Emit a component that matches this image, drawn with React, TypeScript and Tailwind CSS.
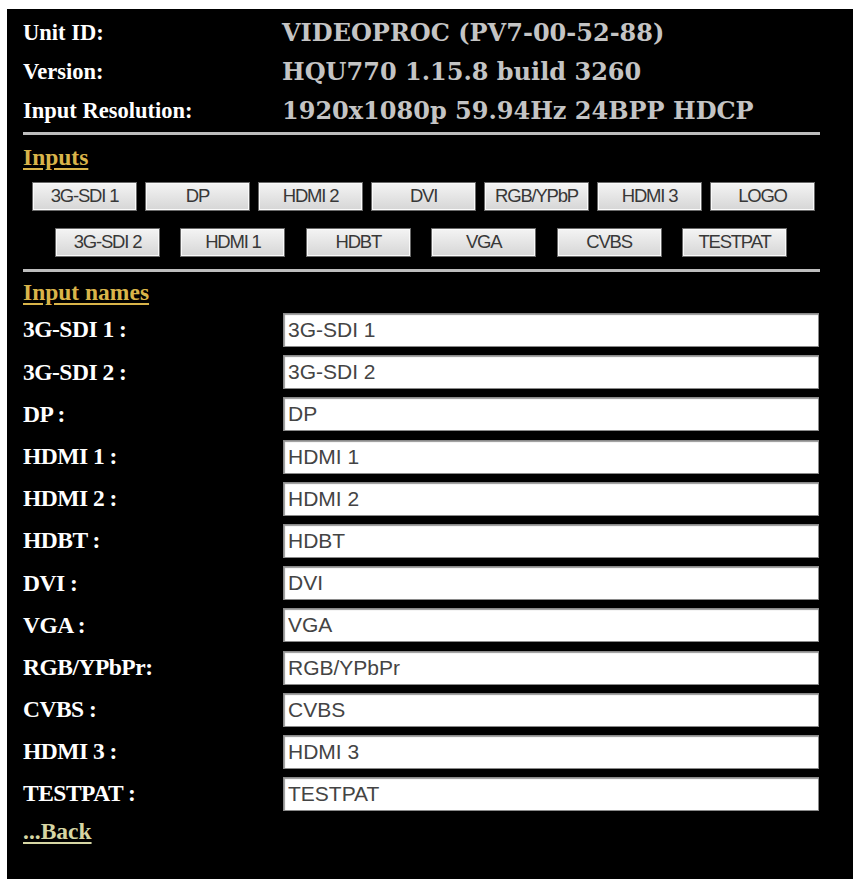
import React from 'react';

const info = [
  { label: 'Unit ID:', value: 'VIDEOPROC (PV7-00-52-88)' },
  { label: 'Version:', value: 'HQU770 1.15.8 build 3260' },
  { label: 'Input Resolution:', value: '1920x1080p 59.94Hz 24BPP HDCP' },
];

const row1 = ['3G-SDI 1', 'DP', 'HDMI 2', 'DVI', 'RGB/YPbP', 'HDMI 3', 'LOGO'];
const row2 = ['3G-SDI 2', 'HDMI 1', 'HDBT', 'VGA', 'CVBS', 'TESTPAT'];

const names = [
  { label: '3G-SDI 1 :', value: '3G-SDI 1' },
  { label: '3G-SDI 2 :', value: '3G-SDI 2' },
  { label: 'DP :', value: 'DP' },
  { label: 'HDMI 1 :', value: 'HDMI 1' },
  { label: 'HDMI 2 :', value: 'HDMI 2' },
  { label: 'HDBT :', value: 'HDBT' },
  { label: 'DVI :', value: 'DVI' },
  { label: 'VGA :', value: 'VGA' },
  { label: 'RGB/YPbPr:', value: 'RGB/YPbPr' },
  { label: 'CVBS :', value: 'CVBS' },
  { label: 'HDMI 3 :', value: 'HDMI 3' },
  { label: 'TESTPAT :', value: 'TESTPAT' },
];

function InputButton({ label }: { label: string }) {
  return (
    <button className="w-[105px] h-[29px] shrink-0 border border-[#6a6a6a] bg-gradient-to-b from-[#f4f4f4] to-[#d6d6d6] text-[#383838] text-[18.5px] leading-none tracking-[-1.2px] font-['Liberation_Sans',Arial,sans-serif] shadow-[inset_0_0_0_1px_#fafafa]">
      {label}
    </button>
  );
}

export default function App() {
  return (
    <div className="bg-white w-[854px] h-[881px] pt-[9px] pl-[7px]">
      <div className="w-[846px] h-[870px] bg-black pl-4 pt-[4px] font-['Liberation_Serif','Times_New_Roman',serif]">
        {/* unit details */}
        <div className="flex flex-col">
          {info.map(row => (
            <div key={row.label} className="flex items-center h-[39px]">
              <div className="w-[259px] text-white font-bold text-[22.5px]">{row.label}</div>
              <div className="text-[#c4c4c4] font-bold text-[24px] font-['DejaVu_Serif',serif]">{row.value}</div>
            </div>
          ))}
        </div>
        <div className="w-[797px] h-[3px] bg-[#bdbdbd] mt-[2px]" />

        <div className="mt-[9px] h-[26px] leading-[26px] text-[23.5px] font-bold text-[#d9b44a] underline underline-offset-[3px]">
          Inputs
        </div>
        <div className="flex gap-[8px] ml-[9px] mt-[12px]">
          {row1.map(b => <InputButton key={b} label={b} />)}
        </div>
        <div className="flex gap-[20.4px] ml-[32px] mt-[17px]">
          {row2.map(b => <InputButton key={b} label={b} />)}
        </div>
        <div className="w-[797px] h-[3px] bg-[#bdbdbd] mt-[12px]" />

        <div className="mt-[7px] h-[26px] leading-[26px] text-[23.5px] font-bold text-[#d9b44a] underline underline-offset-[3px]">
          Input names
        </div>
        <div className="flex flex-col gap-[8.2px] mt-[8px]">
          {names.map(n => (
            <div key={n.label} className="flex items-center h-[34px]">
              <div className="w-[260px] text-white font-bold text-[23.5px] tracking-[-0.5px]">{n.label}</div>
              <input
                readOnly
                value={n.value}
                className="w-[536px] h-[34px] bg-white border border-[#8a8a8a] shadow-[inset_1px_1px_1px_#9a9a9a] pl-[4px] text-[21px] text-[#444] font-['Liberation_Sans',Arial,sans-serif] outline-none"
              />
            </div>
          ))}
        </div>
        <div className="mt-[3px] text-[23.5px] font-bold text-[#d6d6a4] underline underline-offset-[3px]">
          ...Back
        </div>
      </div>
    </div>
  );
}
